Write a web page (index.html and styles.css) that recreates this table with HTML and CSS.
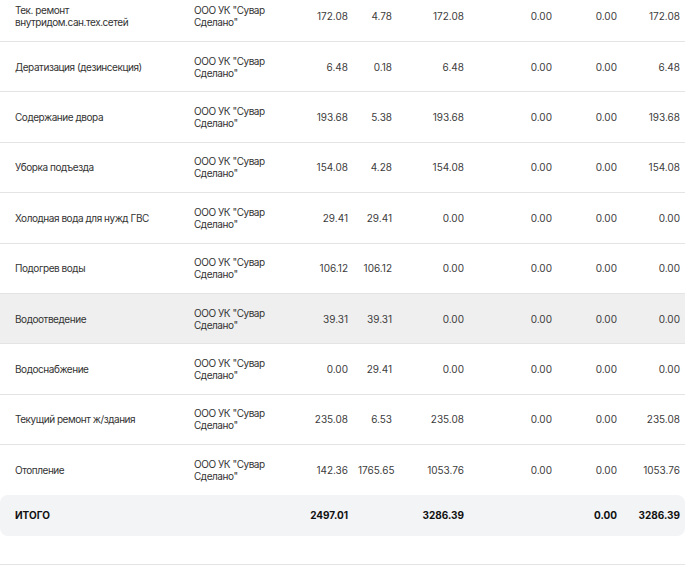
FILE: index.html
```html
<!DOCTYPE html>
<html lang="ru">
<head>
<meta charset="utf-8">
<title>Начисления</title>
<link rel="stylesheet" href="styles.css">
</head>
<body>
<div class="viewport">
  <table class="charges">
    <colgroup>
      <col class="c-name"><col class="c-org"><col class="c-n1"><col class="c-n2">
      <col class="c-n3"><col class="c-n4"><col class="c-n5"><col class="c-n6">
    </colgroup>
    <tbody>
      <tr><td class="name">Тек. ремонт внутридом.сан.тех.сетей</td><td class="org">ООО УК "Сувар Сделано"</td><td class="num">172.08</td><td class="num">4.78</td><td class="num">172.08</td><td class="num">0.00</td><td class="num">0.00</td><td class="num">172.08</td></tr>
      <tr><td class="name">Дератизация (дезинсекция)</td><td class="org">ООО УК "Сувар Сделано"</td><td class="num">6.48</td><td class="num">0.18</td><td class="num">6.48</td><td class="num">0.00</td><td class="num">0.00</td><td class="num">6.48</td></tr>
      <tr><td class="name">Содержание двора</td><td class="org">ООО УК "Сувар Сделано"</td><td class="num">193.68</td><td class="num">5.38</td><td class="num">193.68</td><td class="num">0.00</td><td class="num">0.00</td><td class="num">193.68</td></tr>
      <tr><td class="name">Уборка подъезда</td><td class="org">ООО УК "Сувар Сделано"</td><td class="num">154.08</td><td class="num">4.28</td><td class="num">154.08</td><td class="num">0.00</td><td class="num">0.00</td><td class="num">154.08</td></tr>
      <tr><td class="name">Холодная вода для нужд ГВС</td><td class="org">ООО УК "Сувар Сделано"</td><td class="num">29.41</td><td class="num">29.41</td><td class="num">0.00</td><td class="num">0.00</td><td class="num">0.00</td><td class="num">0.00</td></tr>
      <tr><td class="name">Подогрев воды</td><td class="org">ООО УК "Сувар Сделано"</td><td class="num">106.12</td><td class="num">106.12</td><td class="num">0.00</td><td class="num">0.00</td><td class="num">0.00</td><td class="num">0.00</td></tr>
      <tr class="hover"><td class="name">Водоотведение</td><td class="org">ООО УК "Сувар Сделано"</td><td class="num">39.31</td><td class="num">39.31</td><td class="num">0.00</td><td class="num">0.00</td><td class="num">0.00</td><td class="num">0.00</td></tr>
      <tr><td class="name">Водоснабжение</td><td class="org">ООО УК "Сувар Сделано"</td><td class="num">0.00</td><td class="num">29.41</td><td class="num">0.00</td><td class="num">0.00</td><td class="num">0.00</td><td class="num">0.00</td></tr>
      <tr><td class="name">Текущий ремонт ж/здания</td><td class="org">ООО УК "Сувар Сделано"</td><td class="num">235.08</td><td class="num">6.53</td><td class="num">235.08</td><td class="num">0.00</td><td class="num">0.00</td><td class="num">235.08</td></tr>
      <tr class="last"><td class="name">Отопление</td><td class="org">ООО УК "Сувар Сделано"</td><td class="num">142.36</td><td class="num">1765.65</td><td class="num">1053.76</td><td class="num">0.00</td><td class="num">0.00</td><td class="num">1053.76</td></tr>
    </tbody>
    <tfoot>
      <tr class="total"><td class="name">ИТОГО</td><td></td><td class="num">2497.01</td><td></td><td class="num">3286.39</td><td></td><td class="num">0.00</td><td class="num">3286.39</td></tr>
    </tfoot>
  </table>
  <div class="after"></div>
</div>
</body>
</html>
```

FILE: styles.css
```css
html, body {
  margin: 0;
  padding: 0;
  background: #ffffff;
}

body {
  font-family: Inter, "Noto Sans", sans-serif;
  font-size: 10px;
  color: #333333;
}

.viewport {
  width: 685px;
  margin-top: -8.4px;
}

.charges {
  width: 685px;
  table-layout: fixed;
  border-collapse: separate;
  border-spacing: 0;
}

.c-name { width: 189px; }
.c-org  { width: 100px; }
.c-n1   { width: 64px; }
.c-n2   { width: 44px; }
.c-n3   { width: 72px; }
.c-n4   { width: 88px; }
.c-n5   { width: 65px; }
.c-n6   { width: 63px; }

.charges td {
  height: 49.4px;
  padding: 0 5px;
  line-height: 12px;
  vertical-align: middle;
  border-bottom: 1px solid #e4e4e4;
}

.charges td.name {
  padding-left: 15px;
}

.charges tbody td.name,
.charges tbody td.org {
  letter-spacing: -0.45px;
}

.charges td.num {
  text-align: right;
  color: #3c3c3c;
}

.charges tr.hover td {
  background: #efefef;
}

.charges tr.last td {
  border-bottom: none;
}

.charges tr.total td {
  height: 41px;
  border-bottom: none;
  background: #f3f4f6;
  font-weight: 700;
  color: #111111;
}

.charges tr.total td.num {
  color: #111111;
}

.charges tr.total td:first-child {
  border-radius: 8px 0 0 8px;
}

.charges tr.total td:last-child {
  border-radius: 0 8px 8px 0;
}

.after {
  height: 28px;
  border-bottom: 1px solid #e4e4e4;
}
```
